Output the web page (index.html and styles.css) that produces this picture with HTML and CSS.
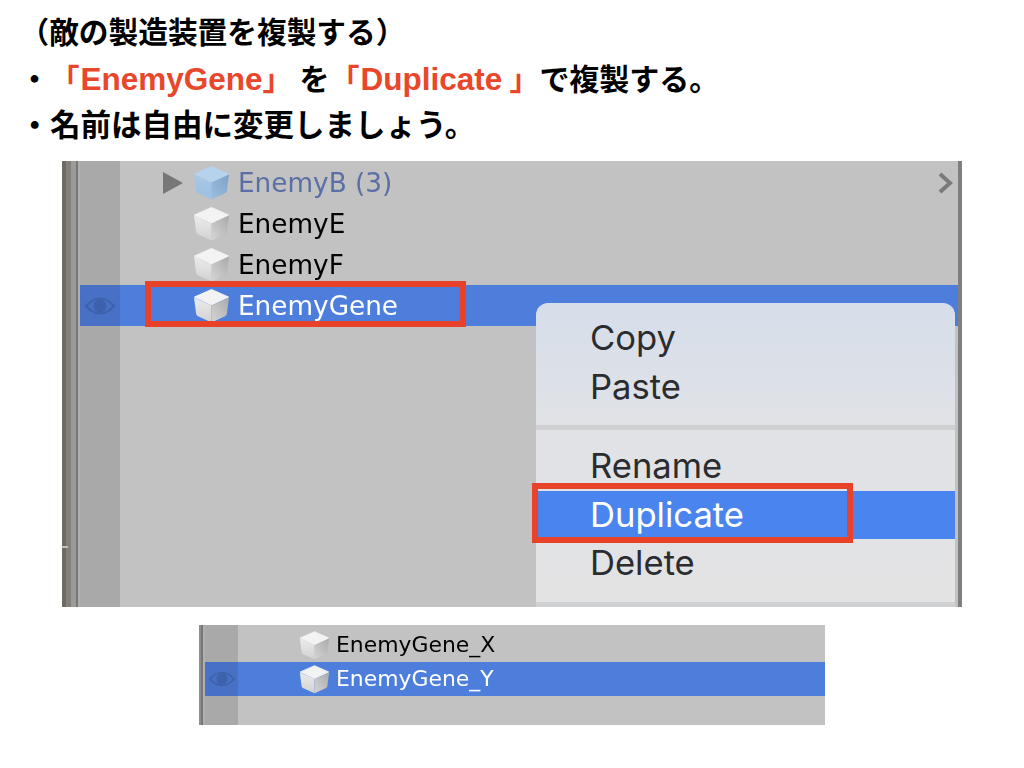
FILE: index.html
```html
<!DOCTYPE html>
<html>
    <head>
        <meta charset="UTF-8">
        <title>敵の製造装置を複製する</title>
        <link rel="stylesheet" href="styles.css">
    </head>
    <body>
        <!-- 共通アイコン -->
        <svg class="defs" width="0" height="0">
            <defs>
                <linearGradient id="cubeLeft" x1="0" y1="0" x2="0" y2="1">
                    <stop offset="0" stop-color="#ebebeb"/>
                    <stop offset="1" stop-color="#d2d2d2"/>
                </linearGradient>
                <linearGradient id="cubeRight" x1="1" y1="0" x2="0" y2="1">
                    <stop offset="0" stop-color="#a9a9a9"/>
                    <stop offset="1" stop-color="#d6d6d6"/>
                </linearGradient>
                <linearGradient id="blueLeft" x1="0" y1="0" x2="0" y2="1">
                    <stop offset="0" stop-color="#a8c8e8"/>
                    <stop offset="1" stop-color="#9dbfe0"/>
                </linearGradient>
                <linearGradient id="blueRight" x1="1" y1="0" x2="0" y2="1">
                    <stop offset="0" stop-color="#7da3c9"/>
                    <stop offset="1" stop-color="#9dbddd"/>
                </linearGradient>
                <symbol id="cube" viewBox="0 0 37 34">
                    <path d="M18.5 0.5 L35.5 8 L18.5 16 L1.5 8 Z" fill="#f3f3f3" stroke="#f3f3f3" stroke-linejoin="round"/>
                    <path d="M1 8.5 L18.5 16.5 L18.5 33.5 L4.5 27 Q3 26 3 24 Z" fill="url(#cubeLeft)"/>
                    <path d="M36 8.5 L18.5 16.5 L18.5 33.5 L32.5 27 Q34 26 34 24 Z" fill="url(#cubeRight)"/>
                </symbol>
                <symbol id="cubeBlue" viewBox="0 0 37 34">
                    <path d="M18.5 0.5 L35.5 8 L18.5 16 L1.5 8 Z" fill="#b7d2ec" stroke="#b7d2ec" stroke-linejoin="round"/>
                    <path d="M1 8.5 L18.5 16.5 L18.5 33.5 L4.5 27 Q3 26 3 24 Z" fill="url(#blueLeft)"/>
                    <path d="M36 8.5 L18.5 16.5 L18.5 33.5 L32.5 27 Q34 26 34 24 Z" fill="url(#blueRight)"/>
                </symbol>
                <symbol id="eye" viewBox="0 0 30 18">
                    <path d="M1 9 Q15 -6 29 9 Q15 24 1 9 Z" fill="none" stroke="currentColor" stroke-width="2"/>
                    <circle cx="15" cy="9" r="6.5" fill="currentColor"/>
                </symbol>
            </defs>
        </svg>

        <div class="notes">
            <p class="line-title">（敵の製造装置を複製する）</p>
            <p class="line-dup">・<span class="hl hl-first">「<span class="latin">EnemyGene</span>」</span>を<span class="hl">「<span class="latin dup">Duplicate</span>」</span>で複製する。</p>
            <p>・名前は自由に変更しましょう。</p>
        </div>

        <div class="panel panel-large">
            <div class="strip">
                <i class="s1"></i><i class="s2"></i><i class="s3"></i><i class="s4"></i><i class="s5"></i>
            </div>
            <span class="tick"></span>
            <div class="tree">
                <div class="row">
                    <div class="gutter"></div>
                    <div class="item">
                        <svg class="twisty" viewBox="0 0 20 22"><path d="M0 0 L20 11 L0 22 Z" fill="#777"/></svg>
                        <svg class="cube"><use href="#cubeBlue"/></svg>
                        <span class="name prefab">EnemyB (3)</span>
                        <svg class="chevron" viewBox="0 0 15 22"><path d="M2 2 L12 11 L2 20" fill="none" stroke="#7a7a7a" stroke-width="4"/></svg>
                    </div>
                </div>
                <div class="row">
                    <div class="gutter"></div>
                    <div class="item">
                        <span class="no-twisty"></span>
                        <svg class="cube"><use href="#cube"/></svg>
                        <span class="name">EnemyE</span>
                    </div>
                </div>
                <div class="row">
                    <div class="gutter"></div>
                    <div class="item">
                        <span class="no-twisty"></span>
                        <svg class="cube"><use href="#cube"/></svg>
                        <span class="name">EnemyF</span>
                    </div>
                </div>
                <div class="row selected">
                    <div class="gutter"><svg class="eye"><use href="#eye"/></svg></div>
                    <div class="item">
                        <span class="no-twisty"></span>
                        <svg class="cube"><use href="#cube"/></svg>
                        <span class="name">EnemyGene</span>
                    </div>
                </div>
            </div>
            <div class="menu">
                <div class="menu-group">
                    <div class="menu-item">Copy</div>
                    <div class="menu-item">Paste</div>
                </div>
                <div class="menu-sep"></div>
                <div class="menu-group">
                    <div class="menu-item">Rename</div>
                    <div class="menu-item active">Duplicate</div>
                    <div class="menu-item">Delete</div>
                </div>
                <div class="menu-sep"></div>
            </div>
            <div class="mark mark-row"></div>
            <div class="mark mark-menu"></div>
        </div>

        <div class="panel panel-small">
            <div class="strip">
                <i class="s6"></i><i class="s4"></i><i class="s5"></i>
            </div>
            <div class="tree">
                <div class="row">
                    <div class="gutter"></div>
                    <div class="item">
                        <svg class="cube"><use href="#cube"/></svg>
                        <span class="name">EnemyGene_X</span>
                    </div>
                </div>
                <div class="row selected">
                    <div class="gutter"><svg class="eye"><use href="#eye"/></svg></div>
                    <div class="item">
                        <svg class="cube"><use href="#cube"/></svg>
                        <span class="name">EnemyGene_Y</span>
                    </div>
                </div>
            </div>
        </div>
    </body>
</html>
```

FILE: styles.css
```css
* {
    box-sizing: border-box;
}

body {
    margin: 0;
    background: #fff;
    color: #000;
    font-family: "Liberation Sans", "Noto Sans CJK JP", sans-serif;
}

.defs {
    display: block;
    height: 0;
}

/* 説明文 */
.notes {
    padding: 10px 0 0 19.5px;
    font-size: 30.5px;
    font-weight: bold;
    line-height: 46px;
    text-spacing-trim: space-all;
}

.notes p {
    margin: 0;
    height: 46px;
    white-space: nowrap;
}

.notes .line-title {
    font-size: 29.7px;
}

.notes .line-dup {
    font-size: 30px;
}

.hl {
    color: #e8472b;
}

.hl-first {
    margin-right: 7px;
}

.latin {
    margin-left: 1px;
    font-size: 31.5px;
}

.dup {
    margin-right: 7px;
}

/* Hierarchy パネル */
.panel {
    display: flex;
    position: relative;
    overflow: hidden;
    font-family: "DejaVu Sans", sans-serif;
}

.panel-large {
    width: 900px;
    height: 446px;
    margin: 13px 0 0 62px;
    padding-right: 4px;
    background: linear-gradient(to right, #c2c2c2 896px, #7f7f7f 896px);
}

.panel-small {
    width: 626px;
    height: 100px;
    margin: 18px 0 0 199px;
}

.strip {
    display: flex;
    flex: none;
}

.strip i {
    display: block;
}

.s1 { width: 4px; background: #6e6a64; }
.s2 { width: 5px; background: #837f79; }
.s3 { width: 5px; background: #9b9b9b; }
.s4 { width: 2px; background: #777; }
.s5 { width: 2px; background: #b0b0b0; }
.s6 { width: 2px; background: #8e8e8e; }

.tick {
    position: absolute;
    left: 0;
    top: 385px;
    width: 6px;
    height: 2px;
    background: #c4c0b8;
}

.tree {
    flex: 1;
    background: linear-gradient(to right, #a9a9a9 var(--gutter), #c2c2c2 var(--gutter));
}

.panel-large .tree {
    --gutter: 40px;
    padding-top: 1px;
}

.panel-small .tree {
    --gutter: 33px;
    padding-top: 3px;
}

.row {
    display: flex;
    align-items: center;
}

.panel-large .row {
    height: 41px;
}

.panel-small .row {
    height: 34px;
}

.gutter {
    display: flex;
    flex: none;
    align-items: center;
    justify-content: center;
    height: 100%;
    width: var(--gutter);
}

.item {
    display: flex;
    flex: 1;
    align-items: center;
    height: 100%;
}

.panel-large .item {
    padding-left: 43px;
    padding-right: 5px;
}

.panel-small .item {
    padding-left: 61px;
}

.selected .gutter {
    background: #4870c4;
}

.selected .item {
    background: #4e7edb;
    color: #fff;
}

.twisty {
    width: 20px;
    height: 22px;
    margin-right: 10px;
}

.no-twisty {
    width: 30px;
}

.cube {
    flex: none;
    filter: blur(.4px);
}

.panel-large .cube {
    width: 37px;
    height: 34px;
    margin-right: 8px;
}

.panel-small .cube {
    width: 31px;
    height: 29px;
    margin-right: 6px;
}

.name {
    white-space: nowrap;
    filter: blur(.3px);
}

.panel-large .name {
    font-size: 26.3px;
}

.panel-small .name {
    padding-bottom: 2px;
    font-size: 21.9px;
}

.prefab {
    color: #5a6fa5;
}

.chevron {
    width: 15px;
    height: 22px;
    margin-left: auto;
    filter: blur(.6px);
}

.eye {
    color: #3d62ab;
    filter: blur(.4px);
}

.panel-large .eye {
    width: 30px;
    height: 18px;
}

.panel-small .eye {
    width: 26px;
    height: 16px;
}

/* コンテキストメニュー */
.menu {
    position: absolute;
    left: 474px;
    top: 142px;
    width: 419px;
    height: 320px;
    padding-top: 11px;
    border-radius: 12px 12px 0 0;
    background: linear-gradient(to bottom, #d6deea 0, #e0e2e6 120px, #e3e3e3 100%);
    color: #2b2c2f;
    font-family: "Inter", sans-serif;
    font-size: 34.6px;
}

.menu-item {
    height: 48.5px;
    padding-left: 54px;
    line-height: 46px;
}

.menu-item.active {
    background: #4a84ee;
    color: #fff;
}

.menu-sep {
    height: 5px;
    margin: 14px 0 12px;
    background: #cfd0d2;
}

/* 赤枠 */
.mark {
    position: absolute;
    border: 6px solid #e8432a;
}

.mark-row {
    left: 83px;
    top: 120px;
    width: 321px;
    height: 46px;
}

.mark-menu {
    left: 470px;
    top: 322px;
    width: 321px;
    height: 60px;
}
```
